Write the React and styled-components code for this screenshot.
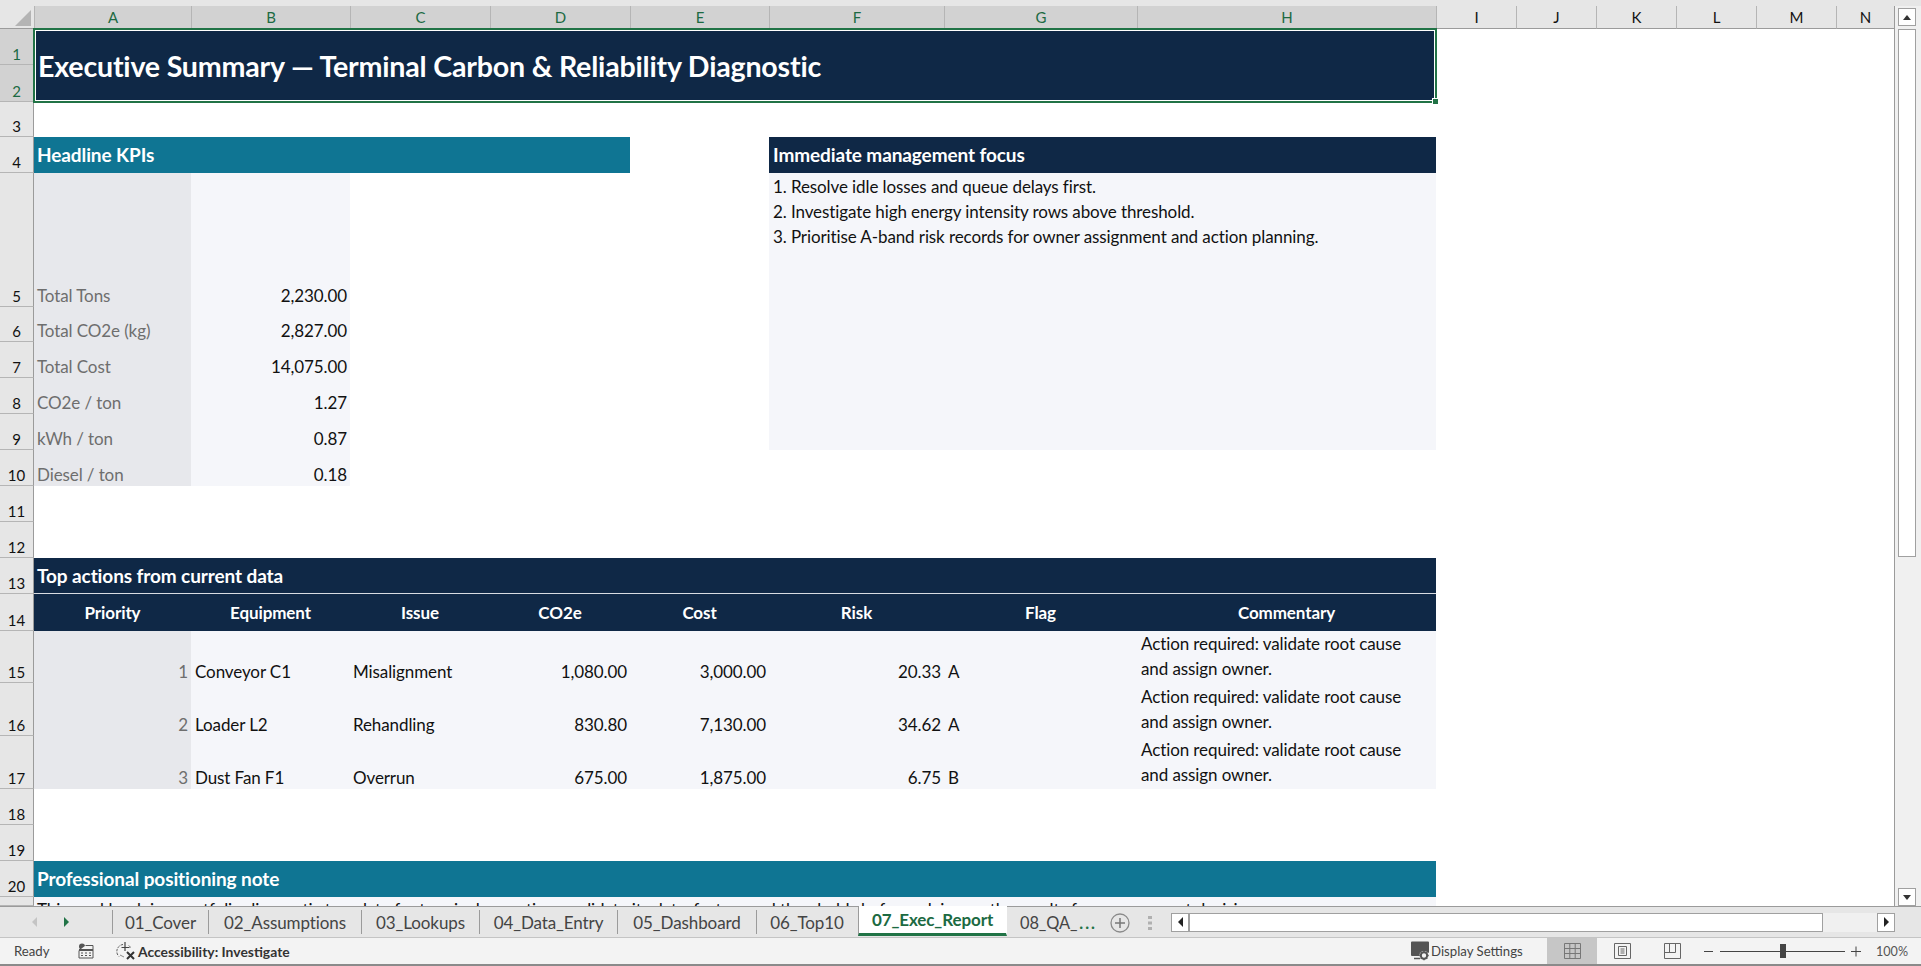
import React from 'react';
import styled, { createGlobalStyle } from 'styled-components';

const NAVY = '#0f2846';
const TEAL = '#0f7593';
const LIGHT = '#f5f6fa';
const SHADE = '#e7e8ec';
const GREEN = '#217346';

const GlobalStyle = createGlobalStyle`
  html, body {
    margin: 0;
    padding: 0;
    background: #e6e6e6;
    overflow: hidden;
  }
  * {
    box-sizing: border-box;
  }
`;

const Window = styled.div`
  width: 1921px;
  height: 966px;
  display: flex;
  flex-direction: column;
  background: #e6e6e6;
  font-family: Lato, 'Open Sans', sans-serif;
  color: #111;
  overflow: hidden;
`;

const TopStrip = styled.div`
  height: 6px;
  flex: none;
`;

const Workspace = styled.div`
  height: 900px;
  flex: none;
  display: flex;
`;

const Sheet = styled.div`
  width: 1895px;
  height: 900px;
  background: #fff;
  border-right: 1px solid #9b9b9b;
  display: grid;
  grid-template-columns: 34px 157px 159px 140px 140px 139px 175px 193px 299px 80px 80px 80px 80px 80px 58px;
  grid-template-rows: 23px 36px 37px 35px 36px 134px 35px 36px 36px 36px 36px 36px 36px 36px 37px 52px 53px 53px 36px 36px 36px 9px;
  overflow: hidden;
  font-size: 17px;
  letter-spacing: -0.1px;
`;

const Corner = styled.div`
  grid-column: 1;
  grid-row: 1;
  background: #e6e6e6;
  border-bottom: 1px solid #9b9b9b;
  display: flex;
  align-items: flex-end;
  justify-content: flex-end;
  padding: 0 3px 2px 0;

  &::after {
    content: '';
    width: 16px;
    height: 16px;
    background: #b4b4b4;
    clip-path: polygon(100% 0, 100% 100%, 0 100%);
  }
`;

const ColHead = styled.div`
  grid-row: 1;
  grid-column: ${(p) => p.$c};
  display: flex;
  align-items: center;
  justify-content: center;
  padding-bottom: 1px;
  font-size: 15px;
  letter-spacing: 0;
  background: ${(p) => (p.$on ? '#d2d2d2' : '#e6e6e6')};
  color: ${(p) => (p.$on ? '#1c6a42' : '#111')};
  border-left: 1px solid #b5b5b5;
  border-bottom: 1px solid ${(p) => (p.$on ? GREEN : '#9b9b9b')};
`;

const RowHead = styled.div`
  grid-column: 1;
  grid-row: ${(p) => p.$r};
  display: flex;
  align-items: flex-end;
  justify-content: center;
  line-height: 20px;
  font-size: 15px;
  letter-spacing: 0;
  overflow: hidden;
  background: ${(p) => (p.$on ? '#d2d2d2' : '#e6e6e6')};
  color: ${(p) => (p.$on ? '#1c6a42' : '#111')};
  border-right: 1px solid #9b9b9b;
  border-bottom: 1px solid #b5b5b5;
`;

const Cell = styled.div`
  grid-column: ${(p) => p.$c};
  grid-row: ${(p) => p.$r};
  background: ${(p) => p.$bg || 'transparent'};
  color: ${(p) => p.$color || '#111'};
  display: flex;
  align-items: flex-end;
  justify-content: ${(p) => p.$align || 'flex-start'};
  padding: 0 3px 1px ${(p) => p.$inset || 3}px;
  line-height: 20px;
  white-space: nowrap;
  min-width: 0;
`;

const TitleCell = styled(Cell)`
  position: relative;
  margin: -1px;
  background: ${NAVY};
  color: #fff;
  align-items: center;
  padding: 0 0 0 3px;
  font-size: 28.6px;
  font-weight: 700;
  letter-spacing: -0.2px;
  border: 2px solid ${GREEN};
  box-shadow: inset 0 0 0 1px #fff;
`;

const FillHandle = styled.span`
  position: absolute;
  right: -4px;
  bottom: -4px;
  width: 7px;
  height: 7px;
  background: ${GREEN};
  border: 1px solid #fff;
`;

const SectionCell = styled(Cell)`
  color: #fff;
  align-items: center;
  padding: 0 3px 0 ${(p) => p.$inset || 3}px;
  font-size: 19px;
  font-weight: 700;
`;

const HeadCell = styled(Cell)`
  background: ${NAVY};
  color: #fff;
  align-items: center;
  justify-content: center;
  font-weight: 700;
  padding-top: 2px;
`;

const Underline = styled(SectionCell)`
  border-bottom: 1px solid #d8dce2;
`;

const NoteLines = styled(Cell)`
  flex-direction: column;
  justify-content: flex-start;
  align-items: flex-start;
  padding: 1px 3px 0 4px;
  line-height: 25px;
`;

const Commentary = styled(Cell)`
  flex-direction: column;
  justify-content: flex-end;
  align-items: flex-start;
  line-height: 25px;
  padding: 0 3px 2px 4px;
`;

const ClippedNote = styled(Cell)`
  align-items: flex-start;
  padding: 3px 3px 0;
  overflow: hidden;
`;

const VScroll = styled.div`
  width: 26px;
  flex: none;
  padding: 2px 5px 0 3px;
  display: flex;
  flex-direction: column;
  background: #f0f0f0;
`;

const ScrollBtn = styled.div`
  flex: none;
  width: ${(p) => p.$w || 18}px;
  height: ${(p) => p.$h || 18}px;
  background: #fff;
  border: 1px solid #a0a0a0;
  display: flex;
  align-items: center;
  justify-content: center;
`;

const Arrow = styled.span`
  width: 0;
  height: 0;
  border-style: solid;
  border-color: transparent;
  ${(p) => p.$dir === 'up' && `border-width: 0 4px 5px; border-bottom-color: #333;`}
  ${(p) => p.$dir === 'down' && `border-width: 5px 4px 0; border-top-color: #333;`}
  ${(p) => p.$dir === 'left' && `border-width: 5px 5px 5px 0; border-right-color: ${p.$tint || '#222'};`}
  ${(p) => p.$dir === 'right' && `border-width: 5px 0 5px 5px; border-left-color: ${p.$tint || '#222'};`}
`;

const VThumb = styled.div`
  flex: none;
  height: 528px;
  margin-top: 3px;
  background: #fff;
  border: 1px solid #a0a0a0;
`;

const VRest = styled.div`
  flex: 1;
`;

const TabBar = styled.div`
  height: 32px;
  flex: none;
  display: flex;
  background: #e6e6e6;
  border-top: 1px solid #9b9b9b;
  border-bottom: 1px solid #c4c4c4;
  color: #444;
`;

const TabNav = styled.div`
  width: 112px;
  flex: none;
  display: flex;
  align-items: center;
  gap: 27px;
  padding: 0 0 0 32px;
`;

const TabList = styled.div`
  display: flex;
  flex: none;
`;

const Tab = styled.div`
  width: ${(p) => p.$w}px;
  height: ${(p) => (p.$active ? 30 : 24)}px;
  margin-top: ${(p) => (p.$active ? -1 : 3)}px;
  display: flex;
  align-items: center;
  justify-content: center;
  font-size: 17px;
  letter-spacing: -0.1px;
  border-left: ${(p) => (p.$active || p.$first ? '1px solid #9b9b9b' : '0')};
  border-right: 1px solid ${(p) => (p.$active || p.$next ? 'transparent' : '#9b9b9b')};
  ${(p) =>
    p.$active &&
    `
    background: #fff;
    color: #1c6a42;
    font-weight: 700;
    border-bottom: 3px solid ${GREEN};
  `}
`;

const ClippedTab = styled.div`
  width: 91px;
  height: 24px;
  margin-top: 3px;
  flex: none;
  display: flex;
  align-items: center;
  justify-content: space-between;
  padding: 0 1px 0 13px;
  font-size: 16.4px;
  letter-spacing: -0.1px;
`;

const TabMore = styled.span`
  color: ${GREEN};
  font-weight: 700;
  letter-spacing: 2px;
`;

const TabExtras = styled.div`
  width: 73px;
  flex: none;
  display: flex;
  align-items: center;
  padding: 2px 0 0 12px;
  gap: 18px;
`;

const HScroll = styled.div`
  flex: 1;
  display: flex;
  align-items: center;
`;

const HTrack = styled.div`
  width: 634px;
  height: 19px;
  background: #fff;
  border: 1px solid #a0a0a0;
`;

const HRest = styled.div`
  width: 54px;
  height: 19px;
  background: #f0f0f0;
`;

const StatusBar = styled.div`
  height: 26px;
  flex: none;
  display: flex;
  align-items: center;
  background: #f3f3f3;
  color: #444;
  font-size: 13.2px;
`;

const StatusLeft = styled.div`
  display: flex;
  align-items: center;
  padding-left: 14px;
  flex: 1;
`;

const Ready = styled.span`
  width: 64px;
`;

const IconSlot = styled.span`
  display: flex;
  flex: none;
  margin-left: ${(p) => p.$ml || 0}px;
`;

const A11yText = styled.span`
  margin-left: 2px;
  font-size: 13.9px;
  font-weight: 700;
  color: #333;
`;

const DisplayText = styled.span`
  margin-left: 1px;
  width: 116px;
`;

const ViewBtn = styled.div`
  width: 50px;
  height: 26px;
  display: flex;
  align-items: center;
  justify-content: center;
  background: ${(p) => (p.$on ? '#c6c6c6' : 'transparent')};
`;

const ZoomTrack = styled.div`
  position: relative;
  width: 125px;
  height: 1px;
  margin: 0 6px;
  background: #444;
`;

const ZoomThumb = styled.span`
  position: absolute;
  left: 60px;
  top: -7px;
  width: 6px;
  height: 14px;
  background: #444;
`;

const ZoomPct = styled.span`
  width: 60px;
  padding-right: 13px;
  text-align: right;
  font-size: 12.6px;
  color: #555;
`;

const BottomEdge = styled.div`
  flex: none;
  height: 2px;
  background: #8a8a8a;
`;

const COLS = ['A', 'B', 'C', 'D', 'E', 'F', 'G', 'H', 'I', 'J', 'K', 'L', 'M', 'N'];
const KPIS = [
  ['Total Tons', '2,230.00'],
  ['Total CO2e (kg)', '2,827.00'],
  ['Total Cost', '14,075.00'],
  ['CO2e / ton', '1.27'],
  ['kWh / ton', '0.87'],
  ['Diesel / ton', '0.18'],
];
const FOCUS = [
  '1. Resolve idle losses and queue delays first.',
  '2. Investigate high energy intensity rows above threshold.',
  '3. Prioritise A-band risk records for owner assignment and action planning.',
];
const HEADS = ['Priority', 'Equipment', 'Issue', 'CO2e', 'Cost', 'Risk', 'Flag', 'Commentary'];
const ACTIONS = [
  [1, 'Conveyor C1', 'Misalignment', '1,080.00', '3,000.00', '20.33', 'A'],
  [2, 'Loader L2', 'Rehandling', '830.80', '7,130.00', '34.62', 'A'],
  [3, 'Dust Fan F1', 'Overrun', '675.00', '1,875.00', '6.75', 'B'],
];
const TABS = [
  ['01_Cover', 97],
  ['02_Assumptions', 153],
  ['03_Lookups', 118],
  ['04_Data_Entry', 138],
  ['05_Dashboard', 139],
  ['06_Top10', 101],
  ['07_Exec_Report', 149],
];

const MacroIcon = () => (
  <svg width="16" height="16" viewBox="0 0 16 16">
    <circle cx="4" cy="3.5" r="3" fill="#555" />
    <path d="M7.5 2.5H15V15H1V7.5" fill="#f3f3f3" stroke="#555" />
    <path d="M1 6h14v2H1z" fill="#555" />
    <path d="M3 10h2M7 10h2M11 10h2M3 12.5h2M7 12.5h2M11 12.5h2" stroke="#555" />
  </svg>
);

const A11yIcon = () => (
  <svg width="20" height="20" viewBox="0 0 20 20">
    <path d="M7 3.5A7 7 0 0 0 3 15.5" fill="none" stroke="#555" strokeWidth="1" strokeDasharray="2.5 1.2" />
    <path d="M9 1v9M5.5 6.5h8" stroke="#444" strokeWidth="1.2" fill="none" />
    <path d="M4 14l4 2M12.5 4.5l2.5 2" stroke="#888" fill="none" />
    <path d="M11 11l7 7M18 11l-7 7" stroke="#333" strokeWidth="2" />
  </svg>
);

const DisplayIcon = () => (
  <svg width="20" height="20" viewBox="0 0 20 20">
    <path d="M1 1.5A1 1 0 0 1 2 .5h16a1 1 0 0 1 1 1V11a1 1 0 0 1-1 1h-5l-3 3H2a1 1 0 0 1-1-1z" fill="#555" />
    <path d="M4 17.5h6" stroke="#555" strokeWidth="1.5" />
    <circle cx="14" cy="14.5" r="4.6" fill="#f3f3f3" />
    <circle cx="14" cy="14.5" r="3.2" fill="none" stroke="#555" strokeWidth="2" />
    <path d="M14 9.8v2M14 17.2v2M9.3 14.5h2M16.7 14.5h2M10.7 11.2l1.4 1.4M15.9 16.4l1.4 1.4M10.7 17.8l1.4-1.4M15.9 12.6l1.4-1.4" stroke="#555" strokeWidth="1.4" />
  </svg>
);

const NormalIcon = () => (
  <svg width="17" height="16" viewBox="0 0 17 16">
    <path d="M.5.5h16v15H.5zM.5 5.5h16M.5 10.5h16M5.8.5v15M11.2.5v15" fill="none" stroke="#777" />
  </svg>
);

const PageIcon = () => (
  <svg width="17" height="16" viewBox="0 0 17 16">
    <path d="M.5.5h16v15H.5z" fill="none" stroke="#666" />
    <path d="M4.5 3.5h8v9h-8zM6.5 6h4M6.5 8h4M6.5 10h4" fill="none" stroke="#666" />
  </svg>
);

const BreakIcon = () => (
  <svg width="17" height="16" viewBox="0 0 17 16">
    <path d="M.5.5h16v15H.5zM.5 9.5h11V.5M5.5.5v9" fill="none" stroke="#666" />
  </svg>
);

const AddIcon = () => (
  <svg width="20" height="20" viewBox="0 0 20 20">
    <circle cx="10" cy="10" r="9" fill="none" stroke="#8a8a8a" strokeWidth="1.3" />
    <path d="M10 5v10M5 10h10" stroke="#777" strokeWidth="1.5" />
  </svg>
);

const GripIcon = () => (
  <svg width="4" height="14" viewBox="0 0 4 14">
    <path d="M0 0h4v3H0zM0 5.5h4v3H0zM0 11h4v3H0z" fill="#b0b0b0" />
  </svg>
);

const ZoomGlyph = ({ plus }) => (
  <svg width="10" height="11" viewBox="0 0 10 11">
    <path d={plus ? 'M0 5.5h10M5 .5v10' : 'M0 5.5h9'} stroke="#444" />
  </svg>
);

const App = () => {
  const rowNumbers = Array.from({ length: 21 }, (_, i) => i + 1);

  return (
    <Window>
      <GlobalStyle />
      <TopStrip />
      <Workspace>
        <Sheet>
          <Corner />
          {COLS.map((c, i) => (
            <ColHead key={c} $c={i + 2} $on={i < 8}>
              {c}
            </ColHead>
          ))}
          {rowNumbers.map((n) => (
            <RowHead key={n} $r={n + 1} $on={n < 3}>
              {n < 21 ? n : ''}
            </RowHead>
          ))}

          <TitleCell $c="2 / span 8" $r="2 / span 2">
            Executive Summary — Terminal Carbon &amp; Reliability Diagnostic
            <FillHandle />
          </TitleCell>

          <SectionCell $c="2 / span 4" $r={5} $bg={TEAL}>
            Headline KPIs
          </SectionCell>
          <SectionCell $c="7 / span 3" $r={5} $bg={NAVY} $inset={4}>
            Immediate management focus
          </SectionCell>

          <NoteLines $c="7 / span 3" $r="6 / span 5" $bg={LIGHT}>
            {FOCUS.map((line) => (
              <span key={line}>{line}</span>
            ))}
          </NoteLines>

          {KPIS.map(([label, value], i) => (
            <React.Fragment key={label}>
              <Cell $c={2} $r={i + 6} $bg={SHADE} $color="#6e6e6e">
                {label}
              </Cell>
              <Cell $c={3} $r={i + 6} $bg={LIGHT} $align="flex-end">
                {value}
              </Cell>
            </React.Fragment>
          ))}

          <Underline $c="2 / span 8" $r={14} $bg={NAVY}>
            Top actions from current data
          </Underline>
          {HEADS.map((h, i) => (
            <HeadCell key={h} $c={i + 2} $r={15}>
              {h}
            </HeadCell>
          ))}

          {ACTIONS.map((row, i) => (
            <React.Fragment key={row[0]}>
              <Cell $c={2} $r={i + 16} $bg={SHADE} $color="#6e6e6e" $align="flex-end">
                {row[0]}
              </Cell>
              <Cell $c={3} $r={i + 16} $bg={LIGHT} $inset={4}>
                {row[1]}
              </Cell>
              <Cell $c={4} $r={i + 16} $bg={LIGHT}>
                {row[2]}
              </Cell>
              <Cell $c={5} $r={i + 16} $bg={LIGHT} $align="flex-end">
                {row[3]}
              </Cell>
              <Cell $c={6} $r={i + 16} $bg={LIGHT} $align="flex-end">
                {row[4]}
              </Cell>
              <Cell $c={7} $r={i + 16} $bg={LIGHT} $align="flex-end">
                {row[5]}
              </Cell>
              <Cell $c={8} $r={i + 16} $bg={LIGHT} $inset={4}>
                {row[6]}
              </Cell>
              <Commentary $c={9} $r={i + 16} $bg={LIGHT}>
                <span>Action required: validate root cause</span>
                <span>and assign owner.</span>
              </Commentary>
            </React.Fragment>
          ))}

          <SectionCell $c="2 / span 8" $r={21} $bg={TEAL}>
            Professional positioning note
          </SectionCell>
          <ClippedNote $c="2 / span 8" $r={22} $bg={LIGHT}>
            This workbook is a portfolio diagnostic template for terminal operations; validate its data, factors and thresholds before relying on the results for management decisions.
          </ClippedNote>
        </Sheet>
        <VScroll>
          <ScrollBtn>
            <Arrow $dir="up" />
          </ScrollBtn>
          <VThumb />
          <VRest />
          <ScrollBtn>
            <Arrow $dir="down" />
          </ScrollBtn>
        </VScroll>
      </Workspace>

      <TabBar>
        <TabNav>
          <Arrow $dir="left" $tint="#c4c4c4" />
          <Arrow $dir="right" $tint={GREEN} />
        </TabNav>
        <TabList>
          {TABS.map(([name, w], i) => (
            <Tab key={name} $w={w} $first={i === 0} $active={i === 6} $next={i === 5}>
              {name}
            </Tab>
          ))}
        </TabList>
        <ClippedTab>
          <span>08_QA_</span>
          <TabMore>...</TabMore>
        </ClippedTab>
        <TabExtras>
          <AddIcon />
          <GripIcon />
        </TabExtras>
        <HScroll>
          <ScrollBtn $h={19}>
            <Arrow $dir="left" />
          </ScrollBtn>
          <HTrack />
          <HRest />
          <ScrollBtn $h={19}>
            <Arrow $dir="right" />
          </ScrollBtn>
        </HScroll>
      </TabBar>

      <StatusBar>
        <StatusLeft>
          <Ready>Ready</Ready>
          <MacroIcon />
          <IconSlot $ml={22}>
            <A11yIcon />
          </IconSlot>
          <A11yText>Accessibility: Investigate</A11yText>
        </StatusLeft>
        <DisplayIcon />
        <DisplayText>Display Settings</DisplayText>
        <ViewBtn $on>
          <NormalIcon />
        </ViewBtn>
        <ViewBtn>
          <PageIcon />
        </ViewBtn>
        <ViewBtn>
          <BreakIcon />
        </ViewBtn>
        <IconSlot $ml={7}>
          <ZoomGlyph />
        </IconSlot>
        <ZoomTrack>
          <ZoomThumb />
        </ZoomTrack>
        <IconSlot>
          <ZoomGlyph plus />
        </IconSlot>
        <ZoomPct>100%</ZoomPct>
      </StatusBar>
      <BottomEdge />
    </Window>
  );
};

export default App;
